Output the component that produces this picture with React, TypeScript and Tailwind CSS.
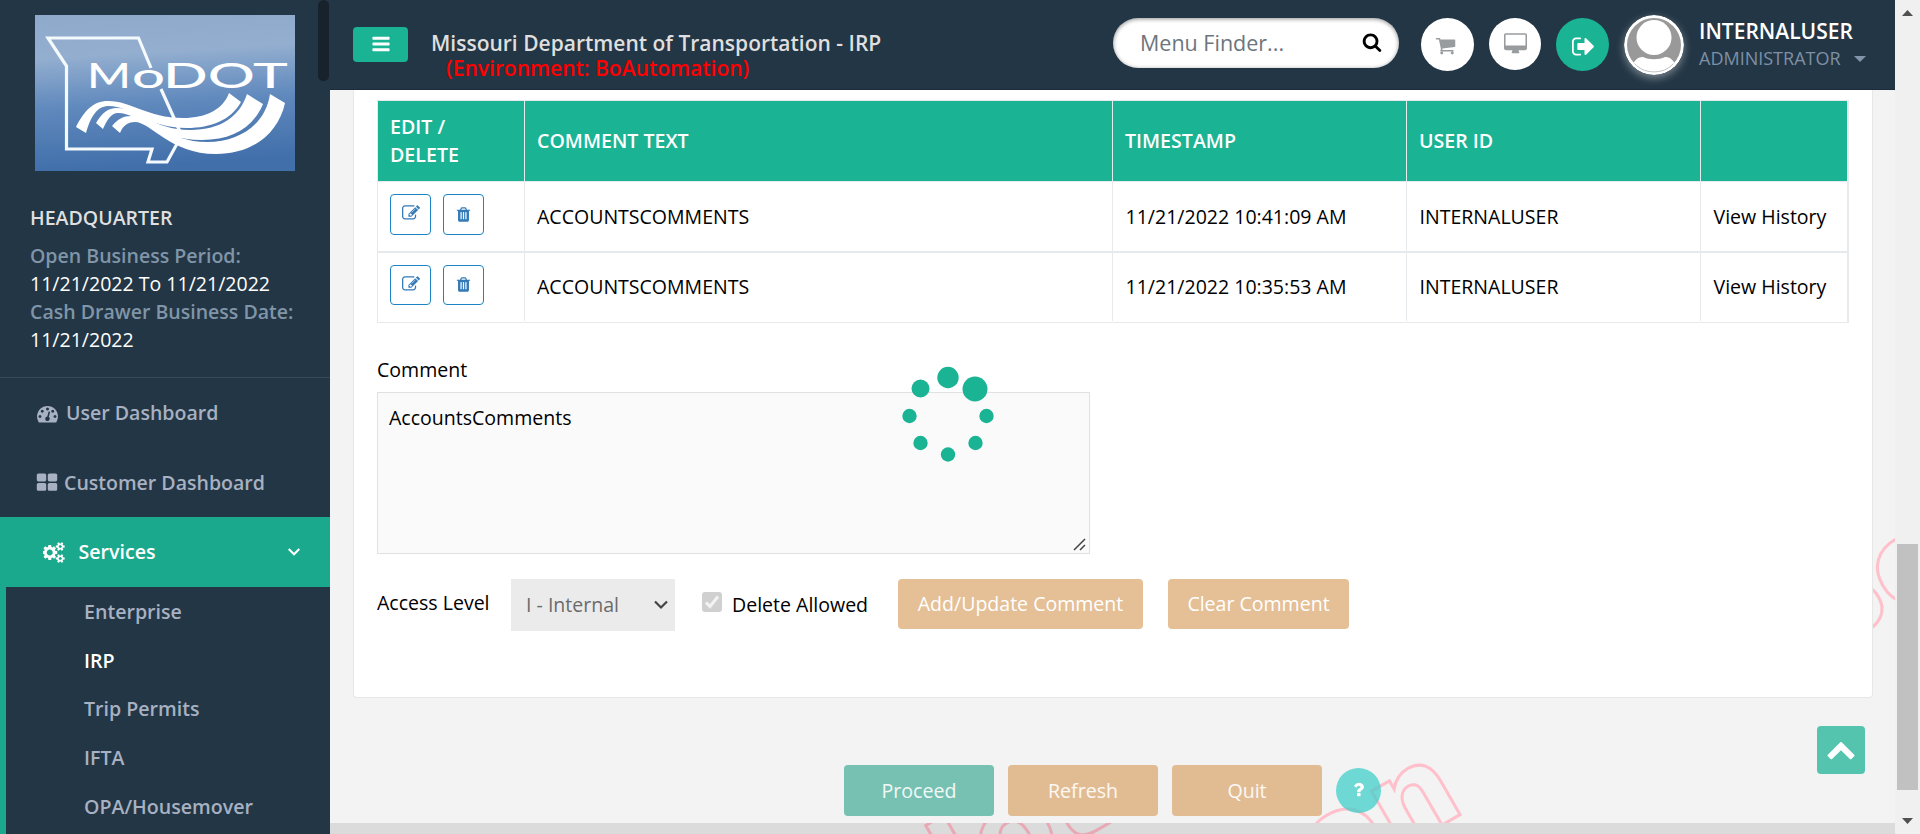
import type { ReactNode } from "react";

const icons = {
  tachometer:
    "M384 1152q0-53-37.5-90.5t-90.5-37.5-90.5 37.5-37.5 90.5 37.5 90.5 90.5 37.5 90.5-37.5 37.5-90.5zm192-448q0-53-37.5-90.5t-90.5-37.5-90.5 37.5-37.5 90.5 37.5 90.5 90.5 37.5 90.5-37.5 37.5-90.5zm428 481l101-382q6-26-7.5-48.5t-38.5-29.5-48 6.500-30 39.500l-101 382q-60 5-107 43.500t-63 98.500q-20 77 20 146t117 89 146-20 89-117q16-60-6-117t-72-91zm660-33q0-53-37.500-90.500t-90.500-37.500-90.500 37.500-37.500 90.500 37.500 90.500 90.500 37.500 90.500-37.500 37.500-90.500zm-640-640q0-53-37.500-90.500t-90.500-37.500-90.500 37.500-37.500 90.500 37.500 90.500 90.500 37.500 90.500-37.500 37.500-90.500zm448 192q0-53-37.500-90.500t-90.500-37.500-90.500 37.500-37.500 90.500 37.500 90.500 90.500 37.500 90.500-37.500 37.500-90.500zm320 448q0 261-141 483-19 29-54 29h-1402q-35 0-54-29-141-221-141-483 0-182 71-348t191-286 286-191 348-71 348 71 286 191 191 286 71 348z",
  large:
    "M832 1024v384q0 52-38 90t-90 38h-512q-52 0-90-38t-38-90v-384q0-52 38-90t90-38h512q52 0 90 38t38 90zm0-768v384q0 52-38 90t-90 38h-512q-52 0-90-38t-38-90v-384q0-52 38-90t90-38h512q52 0 90 38t38 90zm896 768v384q0 52-38 90t-90 38h-512q-52 0-90-38t-38-90v-384q0-52 38-90t90-38h512q52 0 90 38t38 90zm0-768v384q0 52-38 90t-90 38h-512q-52 0-90-38t-38-90v-384q0-52 38-90t90-38h512q52 0 90 38t38 90z",
  cogs: "M832 896q0-106-75-181t-181-75-181 75-75 181 75 181 181 75 181-75 75-181zm768 512q0-52-38-90t-90-38-90 38-38 90q0 53 37.5 90.5t90.5 37.5 90.5-37.5 37.5-90.5zm0-1024q0-52-38-90t-90-38-90 38-38 90q0 53 37.5 90.5t90.5 37.5 90.5-37.5 37.5-90.5zm-384 421v185q0 10-7 19.5t-16 10.5l-155 24q-11 35-32 76 34 48 90 115 7 11 7 20 0 12-7 19-23 30-82.5 89.5t-78.5 59.5q-11 0-21-7l-115-90q-37 19-77 31-11 108-23 155-7 24-30 24h-186q-11 0-20-7.5t-10-17.5l-23-153q-34-10-75-31l-118 89q-7 7-20 7-11 0-21-8-144-133-144-160 0-9 7-19 10-14 41-53t47-61q-23-44-35-82l-152-24q-10-1-17-9.5t-7-19.5v-185q0-10 7-19.5t16-10.5l155-24q11-35 32-76-34-48-90-115-7-11-7-20 0-12 7-20 22-30 82-89t79-59q11 0 21 7l115 90q34-18 77-32 11-108 23-154 7-24 30-24h186q11 0 20 7.5t10 17.5l23 153q34 10 75 31l118-89q8-7 20-7 11 0 21 8 144 133 144 160 0 8-7 19-12 16-42 54t-45 60q23 48 34 82l152 23q10 2 17 10.500t7 19.500zm640 533v140q0 16-149 31-12 27-30 52 51 113 51 138 0 4-4 7-122 71-124 71-8 0-46-47t-52-68q-20 2-30 2t-30-2q-14 21-52 68t-46 47q-2 0-124-71-4-3-4-7 0-25 51-138-18-25-30-52-149-15-149-31v-140q0-16 149-31 13-29 30-52-51-113-51-138 0-4 4-7 4-2 35-20t59-34 30-16q8 0 46 46.500t52 67.500q20-2 30-2t30 2q51-71 92-112l6-2q4 0 124 70 4 3 4 7 0 25-51 138 17 23 30 52 149 15 149 31zm0-1024v140q0 16-149 31-12 27-30 52 51 113 51 138 0 4-4 7-122 71-124 71-8 0-46-47t-52-68q-20 2-30 2t-30-2q-14 21-52 68t-46 47q-2 0-124-71-4-3-4-7 0-25 51-138-18-25-30-52-149-15-149-31v-140q0-16 149-31 13-29 30-52-51-113-51-138 0-4 4-7 4-2 35-20t59-34 30-16q8 0 46 46.500t52 67.500q20-2 30-2t30 2q51-71 92-112l6-2q4 0 124 70 4 3 4 7 0 25-51 138 17 23 30 52 149 15 149 31z",
  bars: "M1664 1344v128q0 26-19 45t-45 19h-1408q-26 0-45-19t-19-45v-128q0-26 19-45t45-19h1408q26 0 45 19t19 45zm0-512v128q0 26-19 45t-45 19h-1408q-26 0-45-19t-19-45v-128q0-26 19-45t45-19h1408q26 0 45 19t19 45zm0-512v128q0 26-19 45t-45 19h-1408q-26 0-45-19t-19-45v-128q0-26 19-45t45-19h1408q26 0 45 19t19 45z",
  search:
    "M1216 832q0-185-131.500-316.500t-316.500-131.500-316.500 131.500-131.500 316.500 131.500 316.500 316.500 131.500 316.500-131.500 131.500-316.500zm512 832q0 52-38 90t-90 38q-54 0-90-38l-343-342q-179 124-399 124-143 0-273.500-55.500t-225-150-150-225-55.500-273.500 55.500-273.500 150-225 225-150 273.500-55.500 273.500 55.500 225 150 150 225 55.500 273.500q0 220-124 399l343 343q37 37 37 90z",
  cart: "M704 1536q0 52-38 90t-90 38-90-38-38-90 38-90 90-38 90 38 38 90zm896 0q0 52-38 90t-90 38-90-38-38-90 38-90 90-38 90 38 38 90zm128-1088v512q0 24-16.500 42.500t-40.500 21.500l-1044 122q13 60 13 70 0 16-24 64h920q26 0 45 19t19 45-19 45-45 19h-1024q-26 0-45-19t-19-45q0-11 8-31.500t16-36 21.500-40 15.500-29.500l-177-823h-204q-26 0-45-19t-19-45 19-45 45-19h256q16 0 28.500 6.500t19.500 15.500 13 24.500 8 26 5.500 29.500 4.500 26h1201q26 0 45 19t19 45z",
  desktop:
    "M1792 992v-832q0-13-9.500-22.500t-22.500-9.500h-1600q-13 0-22.500 9.500t-9.500 22.500v832q0 13 9.500 22.500t22.500 9.500h1600q13 0 22.500-9.500t9.500-22.500zm128-832v1088q0 66-47 113t-113 47h-544q0 37 16 77.500t32 71 16 43.500q0 26-19 45t-45 19h-512q-26 0-45-19t-19-45q0-14 16-44t32-70 16-78h-544q-66 0-113-47t-47-113v-1088q0-66 47-113t113-47h1600q66 0 113 47t47 113z",
  signout:
    "M640 1440q0 4 1 20t.5 26.500-3 23.500-10 19.500-20.500 6.500h-320q-119 0-203.500-84.500t-84.500-203.500v-704q0-119 84.500-203.500t203.500-84.500h320q13 0 22.500 9.500t9.500 22.500q0 4 1 20t.5 26.500-3 23.500-10 19.500-20.500 6.500h-320q-66 0-113 47t-47 113v704q0 66 47 113t113 47h312l11.500 1 11.500 3 8 5.500 7 9 2 13.500zm928-544q0 26-19 45l-544 544q-19 19-45 19t-45-19-19-45v-288h-448q-26 0-45-19t-19-45v-384q0-26 19-45t45-19h448v-288q0-26 19-45t45-19 45 19l544 544q19 19 19 45z",
  edit: "M888 1184l116-116-152-152-116 116v56h96v96h56zm440-720q-16-16-33 1l-350 350q-17 17-1 33t33-1l350-350q17-17 1-33zm80 594v190q0 119-84.500 203.500t-203.500 84.500h-832q-119 0-203.500-84.500t-84.500-203.500v-832q0-119 84.500-203.500t203.500-84.500h832q63 0 117 25 15 7 18 23 3 17-9 29l-49 49q-14 14-32 8-23-6-45-6h-832q-66 0-113 47t-47 113v832q0 66 47 113t113 47h832q66 0 113-47t47-113v-126q0-13 9-22l64-64q15-15 35-7t20 29zm-96-738l288 288-672 672h-288v-288zm444 132l-92 92-288-288 92-92q28-28 68-28t68 28l152 152q28 28 28 68t-28 68z",
  trash:
    "M704 1376v-704q0-14-9-23t-23-9h-64q-14 0-23 9t-9 23v704q0 14 9 23t23 9h64q14 0 23-9t9-23zm256 0v-704q0-14-9-23t-23-9h-64q-14 0-23 9t-9 23v704q0 14 9 23t23 9h64q14 0 23-9t9-23zm256 0v-704q0-14-9-23t-23-9h-64q-14 0-23 9t-9 23v704q0 14 9 23t23 9h64q14 0 23-9t9-23zm-544-992h448l-48-117q-7-9-17-11h-317q-10 2-17 11zm928 32v64q0 14-9 23t-23 9h-96v948q0 83-47 143.500t-113 60.500h-832q-66 0-113-58.500t-47-141.500v-952h-96q-14 0-23-9t-9-23v-64q0-14 9-23t23-9h309l70-167q15-37 54-63t79-26h320q40 0 79 26t54 63l70 167h309q14 0 23 9t9 23z",
  question:
    "M1088 1256v240q0 16-12 28t-28 12h-240q-16 0-28-12t-12-28v-240q0-16 12-28t28-12h240q16 0 28 12t12 28zm316-600q0 54-15.500 101t-35 76.500-55 59.500-57.500 43.500-61 35.500q-41 23-68.500 65t-27.500 67q0 17-12 32.500t-28 15.500h-240q-15 0-25.500-18.500t-10.500-37.500v-45q0-83 65-156.500t143-108.500q59-27 84-56t25-76q0-42-46.500-74t-107.500-32q-65 0-108 29-35 25-107 115-13 16-31 16-12 0-25-8l-164-125q-13-10-15.500-25t5.500-28q160-266 464-266 80 0 161 31t146 83 106 127.500 41 158.500z",
  chevronUp:
    "M1683 1331l-166 165q-19 19-45 19t-45-19l-531-531-531 531q-19 19-45 19t-45-19l-166-165q-19-19-19-45.500t19-45.500l742-741q19-19 45-19t45 19l742 741q19 19 19 45.500t-19 45.500z",
};

function Fa({ d, w = 1792, className }: { d: string; w?: number; className: string }) {
  return (
    <svg viewBox={`0 0 ${w} 1792`} className={className} fill="currentColor">
      <path d={d} />
    </svg>
  );
}

function Logo() {
  return (
    <svg viewBox="0 0 260 156" className="block h-[156px] w-[260px]">
      <defs>
        <linearGradient id="sky" x1="0" y1="0" x2="0.1" y2="1">
          <stop offset="0" stopColor="#8fa9ca" />
          <stop offset="0.28" stopColor="#93aecf" />
          <stop offset="0.6" stopColor="#6089bd" />
          <stop offset="1" stopColor="#416faa" />
        </linearGradient>
      </defs>
      <rect width="260" height="156" fill="url(#sky)" />
      <g fill="none" stroke="#f4f9fd" strokeWidth="3.200">
        <path d="M116 53L103.500 23H13L31.500 51V134H117L113 147H132L143 127L145 117L139 103L126 74" />
      </g>
      <g fill="#fff" fontFamily="Lato, 'Open Sans', sans-serif" fontWeight="500">
        <text x="52" y="72.500" fontSize="34" textLength="44" lengthAdjust="spacingAndGlyphs">M</text>
        <text x="97" y="72.500" fontSize="34" textLength="33" lengthAdjust="spacingAndGlyphs">o</text>
        <text x="128" y="72.500" fontSize="34" textLength="125" lengthAdjust="spacingAndGlyphs">DOT</text>
      </g>
      <g fill="#fff">
        <path d="M41 112C49 96 58 86 73 86C97 86 112 103 148 103C172 103 188 94 194 78L206 87C196 105 176 113 152 113C112 113 96 91 74 91C62 91 56 101 51 118Z" />
        <path d="M61 108C67 98 73 93 82 93C104 93 118 115 155 115C186 115 205 101 212 79L228 89C218 113 197 125 167 125C120 125 105 98 83 98C76 98 72 105 68 114Z" />
        <path d="M77 111C83 104 88 101 96 101C115 101 133 127 172 127C206 127 231 108 235 79L250 88C243 120 216 139 181 139C135 139 116 107 100 107C92 107 88 111 85 118Z" />
      </g>
    </svg>
  );
}

function NavItem({ icon, label, className }: { icon: ReactNode; label: string; className: string }) {
  return (
    <div className={`flex h-[70px] items-center text-[19.55px] font-semibold text-[#a7b1c2] ${className}`}>
      {icon}
      {label}
    </div>
  );
}

function Sidebar() {
  const items = ["Enterprise", "IRP", "Trip Permits", "IFTA", "OPA/Housemover"];
  return (
    <aside className="relative h-full w-[330px] shrink-0 overflow-hidden bg-[#233645]">
      <div className="absolute top-0 left-[318px] h-[81px] w-[11px] rounded-full bg-[#17222c]" />
      <div className="h-[378px] border-b border-[#34495a] pt-[15px] pl-[35px]">
        <Logo />
        <div className="-ml-[5px] pt-[33px] text-[19.55px] leading-[28px] whitespace-nowrap">
          <div className="mb-[10px] font-semibold text-[#dfdfdf]">HEADQUARTER</div>
          <div className="font-semibold text-[#8095a8]">Open Business Period:</div>
          <div className="text-white">11/21/2022 To 11/21/2022</div>
          <div className="font-semibold text-[#8095a8]">Cash Drawer Business Date:</div>
          <div className="text-white">11/21/2022</div>
        </div>
      </div>
      <NavItem className="pl-[37px]" icon={<Fa d={icons.tachometer} className="mr-[8px] size-[21px]" />} label="User Dashboard" />
      <NavItem className="pl-[36px]" icon={<Fa d={icons.large} className="mr-[6px] size-[22px]" />} label="Customer Dashboard" />
      <div className="-mt-px flex h-[70px] items-center bg-[#1aa98c] pr-[30px] pl-[43px] text-[19.6px] font-semibold text-white">
        <Fa d={icons.cogs} w={1920} className="mr-[13px] h-[21px] w-[22.500px]" />
        <span className="flex-1">Services</span>
        <svg viewBox="0 0 12 8" className="h-[8px] w-[12px]" fill="none" stroke="white" strokeWidth="2">
          <path d="M0.700 1L6 6.300L11.300 1" />
        </svg>
      </div>
      <ul className="h-[260px] border-l-[6px] border-[#1aa98c] pl-[78px]">
        {items.map((item) => (
          <li
            key={item}
            className={`flex h-[48.800px] items-center text-[19.6px] font-semibold ${item === "IRP" ? "text-white" : "text-[#a7b1c2]"}`}
          >
            {item}
          </li>
        ))}
      </ul>
    </aside>
  );
}

function Header() {
  return (
    <header className="relative flex h-[90px] shrink-0 items-start border-b border-[#1b2c3c] bg-[#233645] pl-[23px]">
      <div className="mt-[27px] flex h-[35px] w-[55px] items-center justify-center rounded bg-[#1ab394] text-white">
        <Fa d={icons.bars} className="mb-px size-[20px]" />
      </div>
      <div className="mt-[31px] ml-[23px] w-[682px] text-[21px] leading-[25px] font-semibold whitespace-nowrap">
        <div className="text-[#dfdfdf]">Missouri Department of Transportation - IRP</div>
        <div className="pl-[15px] text-[#ff0000]">(Environment: BoAutomation)</div>
      </div>
      <div className="mt-[18px] flex h-[50px] w-[286px] items-center justify-between rounded-full bg-white pr-[17px] pl-[27px] text-[21.5px] text-[#6d757d] shadow-[inset_0_1px_4px_rgba(0,0,0,0.45)]">
        Menu Finder...
        <Fa d={icons.search} className="mb-[2px] size-[20px] text-black" />
      </div>
      <div className="mt-[18px] ml-[22px] flex size-[53px] items-center justify-center rounded-full bg-white text-[#999c9e]">
        <Fa d={icons.cart} className="mr-[4px] mt-[2px] size-[21px]" />
      </div>
      <div className="mt-[18px] ml-[15px] flex size-[52px] items-center justify-center rounded-full bg-white text-[#999c9e]">
        <Fa d={icons.desktop} w={1920} className="h-[22px] w-[23px]" />
      </div>
      <div className="mt-[18px] ml-[15px] flex size-[53px] items-center justify-center rounded-full bg-[#1ab394] text-white">
        <Fa d={icons.signout} className="mt-[3px] ml-[4px] size-[25px]" />
      </div>
      <svg viewBox="0 0 60 60" className="mt-[15px] ml-[15px] size-[60px] rounded-full shadow-[0_3px_8px_rgba(255,255,255,0.4)]">
        <defs>
          <clipPath id="face">
            <circle cx="30" cy="30" r="27" />
          </clipPath>
        </defs>
        <circle cx="30" cy="30" r="30" fill="#fff" />
        <circle cx="30" cy="30" r="27" fill="#999" />
        <g clipPath="url(#face)" fill="#fff">
          <circle cx="30" cy="22.500" r="17.500" />
          <path d="M4 60C8 46 14 41.500 19 42C25 45 35 45 41 42C46 41.500 52 46 56 60Z" />
        </g>
        <path d="M11 49C20 59.500 40 59.500 49 49" fill="none" stroke="#bbb" strokeWidth="0.800" />
      </svg>
      <div className="mt-[18px] ml-[15px] leading-[26px] whitespace-nowrap">
        <div className="text-[21px] font-semibold text-white">INTERNALUSER</div>
        <div className="flex items-center text-[18px] leading-[28px] text-[#7d90a6]">
          ADMINISTRATOR
          <svg viewBox="0 0 12 6" className="mt-[2px] ml-[13px] h-[6px] w-[12px]" fill="#8094aa">
            <path d="M0 0H12L6 6Z" />
          </svg>
        </div>
      </div>
    </header>
  );
}

function CommentsTable() {
  const rows = ["11/21/2022 10:41:09 AM", "11/21/2022 10:35:53 AM"];
  return (
    <div className="w-[1472px] border border-r-2 border-[#e7eaec]">
      <div className="grid h-[80px] grid-cols-[147px_588px_294px_294px_1fr] divide-x divide-[#e7eaec] bg-[#1ab394] text-[19.6px] leading-[28px] font-semibold text-white">
        {["EDIT / DELETE", "COMMENT TEXT", "TIMESTAMP", "USER ID", ""].map((h) => (
          <div key={h} className="flex items-center px-[12px]">
            <span className={h === "EDIT / DELETE" ? "w-[90px]" : ""}>{h}</span>
          </div>
        ))}
      </div>
      {rows.map((time, i) => (
        <div
          key={time}
          className={`grid grid-cols-[147px_588px_294px_294px_1fr] divide-x divide-[#e7eaec] border-[#e7eaec] text-[19.55px] text-black ${i === 0 ? "h-[70px] border-t" : "h-[71px] border-t-2 pb-px"}`}
        >
          <div className="flex items-start gap-[12px] pt-[12px] pl-[12px] text-[#337ab7]">
            <div className={`flex w-[41px] items-center justify-center rounded border border-[#1c84c6] ${i === 0 ? "h-[41px]" : "h-[40px]"}`}>
              <Fa d={icons.edit} className="-mt-[3px] size-[18px]" />
            </div>
            <div className={`flex w-[41px] items-center justify-center rounded border border-[#1c84c6] ${i === 0 ? "h-[41px]" : "h-[40px]"}`}>
              <Fa d={icons.trash} className="-mt-[1px] size-[17px]" />
            </div>
          </div>
          <div className="flex items-center pl-[12px]">ACCOUNTSCOMMENTS</div>
          <div className="flex items-center pl-[12.5px]">{time}</div>
          <div className="flex items-center pl-[12.5px]">INTERNALUSER</div>
          <div className="flex items-center pl-[12.5px]">View History</div>
        </div>
      ))}
    </div>
  );
}

const dots = [
  [48, 11.5, 10.7],
  [75, 23, 12.5],
  [86.5, 50, 7.2],
  [75.5, 77, 7.2],
  [48, 88.5, 7.2],
  [20.5, 77, 7.2],
  [9.5, 50, 7.2],
  [20.5, 22.5, 9],
];

export default function App() {
  return (
    <div className="flex h-[834px] w-[1920px] overflow-hidden bg-[#f3f3f4] font-['Open_Sans',sans-serif]">
      <Sidebar />
      <main className="relative flex w-[1565px] flex-col overflow-hidden bg-[#f3f3f3]">
        <Header />
        <svg viewBox="0 0 1565 733" className="pointer-events-none absolute top-[90px] left-0 h-[733px] w-[1565px]" fill="none" stroke="#ffc0cb" strokeWidth="3" fontFamily="'DejaVu Sans', sans-serif" fontWeight="700" fontSize="118">
          <text transform="translate(1138 720) rotate(-30)" textAnchor="end">on</text>
          <text transform="translate(1490 569) rotate(-30)" letterSpacing="-4">Bo</text>
        </svg>
        <section className="relative ml-[23px] h-[608px] w-[1520px] shrink-0 rounded-b border border-t-0 border-[#e7e7e7] bg-white pt-[10px] pl-[23px]">
          <CommentsTable />
          <div className="pt-[33px] text-[19.55px] leading-[28px] text-black">Comment</div>
          <div className="mt-[8px] flex h-[162px] w-[713px] items-start justify-between border border-[#dfe1e3] bg-[#fafafa] pt-[11px] pl-[11px] text-[19.55px] leading-[28px] text-black">
            AccountsComments
            <svg viewBox="0 0 13 13" className="mr-[3px] mb-[2px] size-[13px] self-end" fill="none" stroke="#444" strokeWidth="1.500">
              <path d="M1 12L12 1M7 12L12 7" />
            </svg>
          </div>
          <div className="mt-[25px] flex items-start text-[19.55px] text-black">
            <div className="w-[134px] leading-[48px]">Access Level</div>
            <div className="flex h-[52px] w-[164px] items-center justify-between bg-[#ebebeb] pr-[7px] pl-[15px] text-[#6b6b6b]">
              I - Internal
              <svg viewBox="0 0 14 10" className="h-[10px] w-[14px]" fill="none" stroke="#444" strokeWidth="2.200">
                <path d="M1 1.500L7 7.500L13 1.500" />
              </svg>
            </div>
            <svg viewBox="0 0 20 20" className="mt-[13px] ml-[27px] size-[20px]">
              <rect width="20" height="20" rx="3" fill="#d0d0d0" />
              <path d="M4 10.500L8 14.500L16 4.500" fill="none" stroke="#f3f3f3" strokeWidth="3" />
            </svg>
            <div className="ml-[10px] w-[166px] leading-[51px]">Delete Allowed</div>
            <div className="flex h-[50px] w-[245px] items-center justify-center rounded bg-[#e5c097] text-white">Add/Update Comment</div>
            <div className="ml-[25px] flex h-[50px] w-[181px] items-center justify-center rounded bg-[#e5c097] text-white">Clear Comment</div>
          </div>
        </section>
        <div className="relative flex pt-[67px] pl-[514px] text-[19.6px] text-white/90">
          <div className="flex h-[51px] w-[150px] items-center justify-center rounded bg-[#76c1b1]">Proceed</div>
          <div className="ml-[14px] flex h-[51px] w-[150px] items-center justify-center rounded bg-[#e1bc93]">Refresh</div>
          <div className="ml-[14px] flex h-[51px] w-[150px] items-center justify-center rounded bg-[#e1bc93]">Quit</div>
          <div className="mt-[3px] ml-[14px] flex size-[45px] items-center justify-center rounded-full bg-[#42cfc9]/75 text-white">
            <Fa d={icons.question} className="mb-[2px] size-[19px]" />
          </div>
        </div>
        <div className="relative mt-auto h-[11px] shrink-0 overflow-hidden bg-[#dbdbdb]">
          <svg viewBox="0 0 1565 11" className="block h-[11px] w-[1565px]" fill="none" stroke="#e8a9b5" strokeWidth="3" fontFamily="'DejaVu Sans', sans-serif" fontWeight="700" fontSize="118">
            <text transform="translate(594 107) rotate(-30)">dot</text>
          </svg>
        </div>
        <div className="absolute top-[726px] left-[1487px] flex size-[48px] items-center justify-center rounded bg-[#55c4ae] text-white">
          <Fa d={icons.chevronUp} className="mb-[2px] size-[30px]" />
        </div>
        <svg viewBox="0 0 96 100" className="absolute top-[366px] left-[570px] h-[100px] w-[96px]" fill="#1ab394">
          {dots.map(([x, y, r]) => (
            <circle key={`${x}-${y}`} cx={x} cy={y} r={r} />
          ))}
        </svg>
      </main>
      <div className="flex w-[25px] flex-col items-center bg-[#f0f0f0]">
        <svg viewBox="0 0 11 6" className="mt-[10px] h-[6px] w-[11px]" fill="#505050">
          <path d="M0 6L5.500 0L11 6Z" />
        </svg>
        <div className="mt-[528px] h-[246px] w-[21px] bg-[#c1c1c1]" />
        <svg viewBox="0 0 11 6" className="mt-[28px] h-[6px] w-[11px]" fill="#505050">
          <path d="M0 0H11L5.500 6Z" />
        </svg>
      </div>
    </div>
  );
}
